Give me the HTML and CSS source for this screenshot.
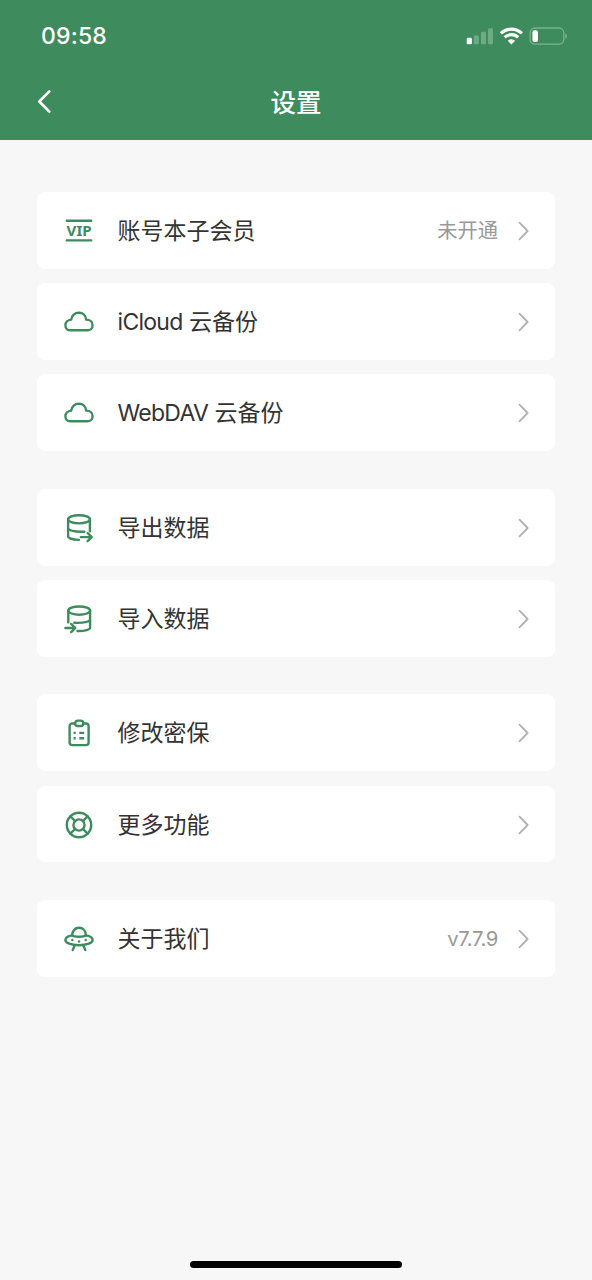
FILE: index.html
```
<!DOCTYPE html>
<html lang="zh-CN">
<head>
<meta charset="utf-8">
<title>设置</title>
<link rel="stylesheet" href="styles.css">
</head>
<body>
<svg class="defs" aria-hidden="true">
  <symbol id="cloud" viewBox="0 0 32 32"><path d="M7.6 24.3C4.4 24.3 2.4 22 2.4 19.2C2.4 16.2 4.8 13.9 8.2 13.6C8.8 9.6 11.8 6.7 15.9 6.7C20 6.7 22.9 9.5 23.1 13.6C27 13.6 29.6 15.8 29.6 19.2C29.6 22.2 27.4 24.3 24.4 24.3Z"/></symbol>
  <symbol id="chevron" viewBox="0 0 12 20"><path d="M1.5 1.7L9.6 10L1.5 18.3"/></symbol>
</svg>
<div class="screen">
  <header class="header">
    <div class="status">
      <span class="time">09:58</span>
      <svg class="status-icons" viewBox="0 0 102 24">
        <rect x="0.7" y="13.8" width="5.2" height="6.5" rx="1.4" fill="#fff"/>
        <g fill="#6cab84"><rect x="7.8" y="11.4" width="5" height="8.9" rx="1.3"/><rect x="15" y="7.8" width="5" height="12.5" rx="1.3"/><rect x="22" y="4.2" width="5" height="16.1" rx="1.3"/></g>
        <g fill="none" stroke="#fff" stroke-width="3.1"><path d="M34.9 9.4a15 15 0 0 1 21 0"/><path d="M38.6 13.4a9.8 9.8 0 0 1 13.6 0"/></g>
        <path d="M45.4 20.5l-3.7-3.7a5.3 5.3 0 0 1 7.4 0z" fill="#fff"/>
        <rect x="64.1" y="4" width="33.6" height="16.2" rx="4.6" fill="none" stroke="#77b28e" stroke-width="1.3"/>
        <rect x="66.4" y="6.3" width="5.6" height="11.6" rx="2" fill="#fff"/>
        <path d="M99.2 9.5c2.5 1 2.5 4.2 0 5.2z" fill="#77b28e"/>
      </svg>
    </div>
    <div class="nav">
      <svg class="back" viewBox="0 0 16 24"><path d="M13.3 1.4L3.3 11.5L13.3 21.6"/></svg>
      <h1 class="title">设置</h1>
    </div>
  </header>
  <main class="list">
    <section class="group">
      <div class="card">
        <svg class="icon" viewBox="0 0 32 32"><path d="M3.8 5.8H28.2M3.8 25.4H28.2"/><text class="vip" x="3.6" y="20.7" textLength="25" lengthAdjust="spacingAndGlyphs">VIP</text></svg>
        <span class="label">账号本子会员</span><span class="value">未开通</span><svg class="arrow"><use href="#chevron"/></svg>
      </div>
      <div class="card"><svg class="icon"><use href="#cloud"/></svg><span class="label"><span class="latin">iCloud</span> 云备份</span><svg class="arrow"><use href="#chevron"/></svg></div>
      <div class="card"><svg class="icon"><use href="#cloud"/></svg><span class="label"><span class="latin">WebDAV</span> 云备份</span><svg class="arrow"><use href="#chevron"/></svg></div>
    </section>
    <section class="group">
      <div class="card">
        <svg class="icon" viewBox="0 0 32 32"><ellipse cx="16" cy="7.3" rx="10.9" ry="4.1"/><path d="M5.1 7.3V24.2C5.1 26.2 9.5 27.7 16 27.9M5.1 16C5.1 18.4 11.5 20.2 21.3 19.7M26.9 7.3V19.3M17.8 25.1H28.4M24.6 21L28.7 25.1L24.6 29.2"/></svg>
        <span class="label">导出数据</span><svg class="arrow"><use href="#chevron"/></svg>
      </div>
      <div class="card">
        <svg class="icon" viewBox="0 0 32 32"><ellipse cx="16.2" cy="7.6" rx="10.9" ry="4.1"/><path d="M27.1 7.6V24.4C27.1 26.5 22 28.2 14.5 28M27.1 16.2C27.1 18.7 20.5 20.3 11.3 19.8M5.3 7.6V19.4M2.4 25H12.1M8.2 20.9L12.3 25L8.2 29.1"/></svg>
        <span class="label">导入数据</span><svg class="arrow"><use href="#chevron"/></svg>
      </div>
    </section>
    <section class="group">
      <div class="card">
        <svg class="icon" viewBox="0 0 32 32"><path d="M12 6.5H9.2A2.6 2.6 0 0 0 6.6 9.1V25.5A2.6 2.6 0 0 0 9.2 28.1H23A2.6 2.6 0 0 0 25.6 25.5V9.1A2.6 2.6 0 0 0 23 6.5H20.5"/><rect x="12.1" y="3.6" width="8.3" height="5.4" rx="2.7"/><path class="square" d="M10.5 15.9H12.7M16.3 15.9H21.2M10.5 21.3H12.7M16.3 21.3H21.2"/></svg>
        <span class="label">修改密保</span><svg class="arrow"><use href="#chevron"/></svg>
      </div>
      <div class="card">
        <svg class="icon" viewBox="0 0 32 32"><circle cx="16" cy="16" r="12.2"/><circle cx="16" cy="16" r="5.6"/><path d="M7.4 7.4L12 12M24.6 7.4L20 12M7.4 24.6L12 20M24.6 24.6L20 20"/></svg>
        <span class="label">更多功能</span><svg class="arrow"><use href="#chevron"/></svg>
      </div>
    </section>
    <section class="group">
      <div class="card">
        <svg class="icon" viewBox="0 0 32 32"><path d="M9.2 12.4C4.8 13.1 2.4 14.8 2.4 16.9C2.4 19.9 8.2 22.3 16 22.3S29.6 19.9 29.6 16.9C29.6 14.8 27.2 13.1 22.8 12.4"/><path d="M9.2 12.4C9.2 7.8 12.1 4.8 16 4.8S22.8 7.8 22.8 12.4C20.8 14.2 11.2 14.2 9.2 12.4ZM11.5 23L9.7 27.1M20.5 23L22.3 27.1"/><g class="dots"><circle cx="9.3" cy="17" r="1.25"/><circle cx="16" cy="18.5" r="1.25"/><circle cx="22.7" cy="17" r="1.25"/></g></svg>
        <span class="label">关于我们</span><span class="value version">v7.7.9</span><svg class="arrow"><use href="#chevron"/></svg>
      </div>
    </section>
  </main>
  <footer class="home"><div class="home-bar"></div></footer>
</div>
</body>
</html>
```
FILE: styles.css
```
* { box-sizing: border-box; }
body { margin: 0; font-family: Inter, "Noto Sans CJK SC", sans-serif; background: #f7f7f7; }
.defs { display: none; }
.screen { width: 592px; height: 1280px; display: flex; flex-direction: column; background: #f7f7f7; }
.header { height: 140px; background: #3e8c5d; color: #fff; }
.status { height: 72px; padding: 0 24px 0 41px; display: flex; align-items: center; justify-content: space-between; }
.time { font-size: 23px; font-weight: 500; letter-spacing: 0.2px; }
.status-icons { width: 102px; height: 24px; }
.nav { height: 60px; padding: 0 36px; display: grid; grid-template-columns: 40px 1fr 40px; align-items: center; }
.back { width: 16px; height: 24px; fill: none; stroke: #fff; stroke-width: 2.6; stroke-linecap: round; stroke-linejoin: round; }
.title { margin: 0; padding-bottom: 2px; text-align: center; font: 500 25.5px/36px "Noto Sans CJK SC", sans-serif; }
.list { flex: 1; padding: 51.9px 37px 0; display: flex; flex-direction: column; gap: 37.4px; }
.group { display: flex; flex-direction: column; gap: 14.4px; }
.card { height: 76.9px; padding: 1px 25px 0 26px; border-radius: 8px; background: #fff; display: flex; align-items: center; }
.icon { width: 32px; height: 32px; flex: none; fill: none; stroke: #3e8c5d; stroke-width: 2.4; stroke-linecap: round; stroke-linejoin: round; }
.vip { font: 700 14px "Noto Sans", sans-serif; fill: #3e8c5d; stroke: none; }
.square { stroke-linecap: butt; }
.dots { fill: #3e8c5d; stroke: none; }
.label { flex: 1; margin-left: 22.6px; font-size: 23px; line-height: 34px; color: #333; }
.latin { letter-spacing: -0.75px; }
.value { margin-right: 20px; font-size: 20.3px; line-height: 30px; color: #999; }
.version { letter-spacing: -0.4px; }
.arrow { width: 12px; height: 20px; flex: none; fill: none; stroke: #b0b0b0; stroke-width: 1.8; stroke-linecap: round; stroke-linejoin: round; }
.home { height: 19px; display: flex; justify-content: center; }
.home-bar { width: 212px; height: 7px; border-radius: 4px; background: #000; }
```
